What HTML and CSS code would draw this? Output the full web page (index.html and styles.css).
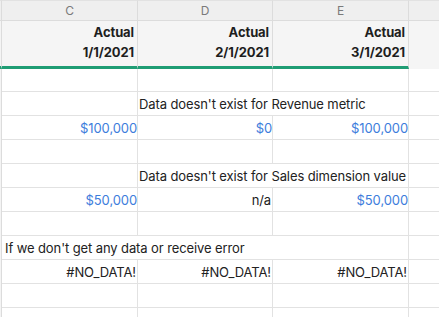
FILE: index.html
```html
<!DOCTYPE html>
<html>
<head>
    <title>Actuals sheet</title>
    <meta charset="UTF-8">
    <meta name="viewport" content="width=device-width, initial-scale=1.0">
    <link rel="stylesheet" href="styles.css">
</head>
<body>
    <div class="sheet">
        <!-- column letters -->
        <div class="edge letters"></div>
        <div class="letter">C</div>
        <div class="letter">D</div>
        <div class="letter">E</div>
        <div class="letter last"></div>

        <!-- header -->
        <div class="edge head"></div>
        <div class="head-cell"><span>Actual</span><span>1/1/2021</span></div>
        <div class="head-cell"><span>Actual</span><span>2/1/2021</span></div>
        <div class="head-cell"><span>Actual</span><span>3/1/2021</span></div>
        <div class="head-cell last"></div>

        <!-- body -->
        <div class="edge"></div><div class="cell"></div><div class="cell"></div><div class="cell"></div><div class="cell last"></div>

        <div class="edge"></div><div class="cell"></div>
        <div class="cell note span2">Data doesn't exist for Revenue metric</div>
        <div class="cell last"></div>

        <div class="edge"></div>
        <div class="cell num money">$100,000</div>
        <div class="cell num money">$0</div>
        <div class="cell num money">$100,000</div>
        <div class="cell last"></div>

        <div class="edge"></div><div class="cell"></div><div class="cell"></div><div class="cell"></div><div class="cell last"></div>

        <div class="edge"></div><div class="cell"></div>
        <div class="cell note span2">Data doesn't exist for Sales dimension value</div>
        <div class="cell last"></div>

        <div class="edge"></div>
        <div class="cell num money">$50,000</div>
        <div class="cell num">n/a</div>
        <div class="cell num money">$50,000</div>
        <div class="cell last"></div>

        <div class="edge"></div><div class="cell"></div><div class="cell"></div><div class="cell"></div><div class="cell last"></div>

        <div class="edge"></div>
        <div class="cell note span3">If we don't get any data or receive error</div>
        <div class="cell last"></div>

        <div class="edge"></div>
        <div class="cell num">#NO_DATA!</div>
        <div class="cell num">#NO_DATA!</div>
        <div class="cell num">#NO_DATA!</div>
        <div class="cell last"></div>

        <div class="edge"></div><div class="cell"></div><div class="cell"></div><div class="cell"></div><div class="cell last"></div>

        <div class="edge"></div><div class="cell"></div><div class="cell"></div><div class="cell"></div><div class="cell last"></div>
    </div>
</body>
</html>
```

FILE: styles.css
```css
body {
    margin: 0;
    font-family: Inter, "Liberation Sans", Arial, sans-serif;
    font-size: 13px;
    letter-spacing: -0.1px;
    color: #222;
    background: #fff;
    overflow: hidden;
}
.sheet {
    display: grid;
    grid-template-columns: 2px 136px 135px 136px 1fr;
    grid-template-rows: 21px 48px 23px repeat(10, 24px);
    width: 439px;
}
.sheet > div {
    box-sizing: border-box;
    min-width: 0;
}
.edge {
    background: #f4f4f4;
    border-right: 1px solid #dcdcdc;
}
.edge.letters {
    background: #efefef;
    border-top: 1px solid #e2e2e2;
    border-bottom: 1px solid #dcdcdc;
}
.edge.head {
    border-bottom: 3px solid #1f9d74;
}
.letter {
    background: #efefef;
    color: #7a7a7a;
    font-size: 12px;
    text-align: center;
    line-height: 19px;
    border-top: 1px solid #e2e2e2;
    border-right: 1px solid #dcdcdc;
    border-bottom: 1px solid #dcdcdc;
}
.head-cell {
    background: #f5f5f5;
    border-right: 1px solid #dcdcdc;
    border-bottom: 3px solid #1f9d74;
    display: flex;
    flex-direction: column;
    align-items: flex-end;
    padding: 1px 3px 0 0;
    font-weight: bold;
    line-height: 20px;
    color: #1e1e1e;
}
.head-cell.last {
    border-right: none;
    border-bottom: 3px solid #f5f5f5;
}
.letter.last {
    border-right: none;
}
.cell {
    border-right: 1px solid #e2e2e2;
    border-bottom: 1px solid #e2e2e2;
    display: flex;
    align-items: center;
    white-space: nowrap;
    overflow: hidden;
    padding: 0 2px;
}
.cell.last {
    border-right: none;
}
.num {
    justify-content: flex-end;
    padding-right: 1px;
}
.money {
    color: #3d7ddc;
    padding-right: 0;
}
.span2 {
    grid-column: span 2;
    padding-left: 1px;
}
.span3 {
    grid-column: span 3;
    padding-left: 3px;
}
```
